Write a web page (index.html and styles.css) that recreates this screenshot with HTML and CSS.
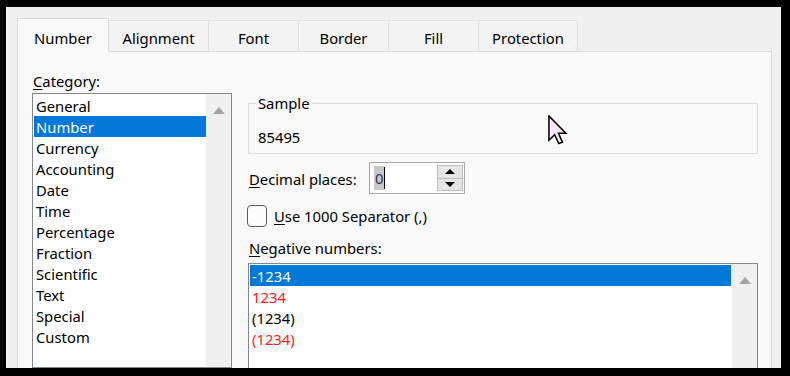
FILE: index.html
```html
<!DOCTYPE html>
<html>
<head>
<meta charset="utf-8">
<link rel="stylesheet" href="styles.css">
</head>
<body>
<div class="screen">
  <div class="dialog">
    <div class="tabs">
      <div class="tab active w-number">Number</div>
      <div class="tab w-align">Alignment</div>
      <div class="tab w-std">Font</div>
      <div class="tab w-std">Border</div>
      <div class="tab w-std">Fill</div>
      <div class="tab w-prot">Protection</div>
    </div>
    <div class="panel">
      <div class="left">
        <div class="label cat-label"><u>C</u>ategory:</div>
        <div class="listbox cat">
          <ul class="items">
            <li>General</li>
            <li class="sel">Number</li>
            <li>Currency</li>
            <li>Accounting</li>
            <li>Date</li>
            <li>Time</li>
            <li>Percentage</li>
            <li>Fraction</li>
            <li>Scientific</li>
            <li>Text</li>
            <li>Special</li>
            <li>Custom</li>
          </ul>
          <div class="scroll"><span class="tri"></span></div>
        </div>
      </div>
      <div class="right">
        <fieldset class="sample">
          <legend>Sample</legend>
          <div class="sample-val">85495</div>
        </fieldset>
        <div class="row dec">
          <span class="dec-label"><u>D</u>ecimal places:</span>
          <div class="spin">
            <div class="spin-field"><span class="seltext">0</span><span class="caret"></span></div>
            <div class="spin-btns">
              <div class="spin-btn"><span class="arr up"></span></div>
              <div class="spin-btn"><span class="arr down"></span></div>
            </div>
          </div>
        </div>
        <div class="row chk">
          <span class="checkbox"></span>
          <span class="chk-label"><u>U</u>se 1000 Separator (,)</span>
        </div>
        <div class="label neg-label"><u>N</u>egative numbers:</div>
        <div class="listbox neg">
          <ul class="items">
            <li class="sel">-1234</li>
            <li class="red">1234</li>
            <li>(1234)</li>
            <li class="red">(1234)</li>
          </ul>
          <div class="scroll"><span class="tri"></span></div>
        </div>
      </div>
    </div>
  </div>
  <svg class="cursor" width="20" height="30" viewBox="0 0 13 19.5">
    <path d="M0.6,0.6 L0.6,16.4 L4.3,12.8 L7.0,18.6 L9.4,17.6 L6.8,11.9 L11.6,11.9 Z" fill="#ffe6fb" stroke="#000" stroke-width="1" stroke-linejoin="miter"/>
  </svg>
</div>
</body>
</html>
```

FILE: styles.css
```css
* { box-sizing: border-box; }

html, body {
  margin: 0;
  padding: 0;
  background: #000;
  width: 790px;
  height: 376px;
  overflow: hidden;
}

body {
  font-family: "Noto Sans", "Open Sans", sans-serif;
  font-size: 14.8px;
  color: #000;
}

.screen {
  position: relative;
  width: 790px;
  height: 376px;
  padding: 7px 9px 0 6px;
}

.dialog {
  height: 361px;
  background: #f0f0f0;
  padding: 11px 9px 0 11px;
  overflow: hidden;
  display: flex;
  flex-direction: column;
}

.tabs {
  display: flex;
  align-items: flex-start;
  height: 34px;
  margin-bottom: -1px;
  position: relative;
  z-index: 1;
  flex: none;
}

.tab {
  height: 31px;
  margin-top: 2px;
  margin-left: -1px;
  border: 1px solid #e0e0e0;
  border-bottom: none;
  background: #f3f3f3;
  text-align: center;
  line-height: 20px;
  padding-top: 7px;
  white-space: nowrap;
}

.tab.active {
  height: 34px;
  margin-top: 0;
  margin-left: 0;
  padding-top: 9px;
  background: #f9f9f9;
  border-color: #d9d9d9;
  position: relative;
  z-index: 2;
}

.w-number { width: 92px; }
.w-align { width: 101px; }
.w-std { width: 91px; }
.w-prot { width: 100px; }

.panel {
  flex: 1;
  width: 755px;
  border: 1px solid #d9d9d9;
  border-bottom: none;
  background: #f9f9f9;
  padding: 18px 13px 0 14px;
  display: flex;
  gap: 16px;
  min-height: 0;
}

.left {
  width: 200px;
  flex: none;
  display: flex;
  flex-direction: column;
}

.label {
  line-height: 20px;
  padding-left: 1px;
}

.cat-label { padding-top: 1px; }

u { text-decoration-thickness: 1px; text-underline-offset: 2px; }

.listbox {
  border: 1px solid #828790;
  background: #fff;
  display: flex;
  padding: 1px 0 0 1px;
  flex: 1;
}

.cat { margin-top: 2px; height: 300px; }

.items {
  list-style: none;
  margin: 0;
  padding: 0;
  flex: 1;
}

.items li {
  height: 21px;
  line-height: 22px;
  padding-left: 2px;
  white-space: nowrap;
}

.items li.sel {
  background: #0078d7;
  color: #fff;
}

.items li.red { color: #ff1a1a; }

.cat .items { flex: none; width: 172px; }

.scroll {
  width: 25px;
  flex: none;
  background: #f0f0f0;
  margin-top: -1px;
  display: flex;
  justify-content: center;
  padding-top: 13px;
}

.tri {
  width: 0;
  height: 0;
  border-left: 6px solid transparent;
  border-right: 6px solid transparent;
  border-bottom: 7px solid #a3a3a3;
}

.right {
  flex: 1;
  display: flex;
  flex-direction: column;
  padding-top: 23px;
}

.sample {
  margin: 0;
  border: 1px solid #dcdcdc;
  padding: 0 9px 6px 7px;
  height: 62px;
}

.sample legend {
  padding: 0 2px;
  line-height: 20px;
}

.sample-val {
  margin-top: 14px;
  line-height: 20px;
  padding-left: 2px;
}

.row {
  display: flex;
  align-items: center;
}

.dec { margin-top: 8px; }

.dec-label {
  width: 121px;
  line-height: 20px;
  padding-top: 2px;
  padding-left: 1px;
}

.spin {
  width: 96px;
  height: 32px;
  border: 1px solid #a8a8a8;
  background: #fff;
  display: flex;
  padding: 2px 1px 2px 4px;
}

.spin-field {
  flex: 1;
  display: flex;
  align-items: center;
}

.seltext {
  background: #c8c8c8;
  line-height: 24px;
  padding: 0 1px;
  color: #1a3a5a;
}

.caret {
  width: 1px;
  height: 22px;
  background: #000;
}

.spin-btns {
  width: 26px;
  display: flex;
  flex-direction: column;
  border: 1px solid #bdbdbd;
  background: #e5e5e5;
}

.spin-btn {
  flex: 1;
  display: flex;
  align-items: center;
  justify-content: center;
}

.spin-btn + .spin-btn { border-top: 1px solid #bdbdbd; }

.arr {
  width: 0;
  height: 0;
  border-left: 5px solid transparent;
  border-right: 5px solid transparent;
}
.arr.up { border-bottom: 5px solid #000; }
.arr.down { border-top: 5px solid #000; }

.chk { margin-top: 11px; }

.checkbox {
  width: 20px;
  height: 22px;
  border: 1px solid #5c5c5c;
  border-radius: 4px;
  background: #fcfcfc;
  margin-left: -1px;
}

.chk-label {
  margin-left: 7px;
  line-height: 20px;
}

.neg-label { margin-top: 11px; }

.neg {
  margin-top: 5px;
  height: 120px;
  flex: none;
}

.neg .items li.sel { margin-right: 1px; }

.cursor {
  position: absolute;
  left: 548px;
  top: 115px;
}
```
